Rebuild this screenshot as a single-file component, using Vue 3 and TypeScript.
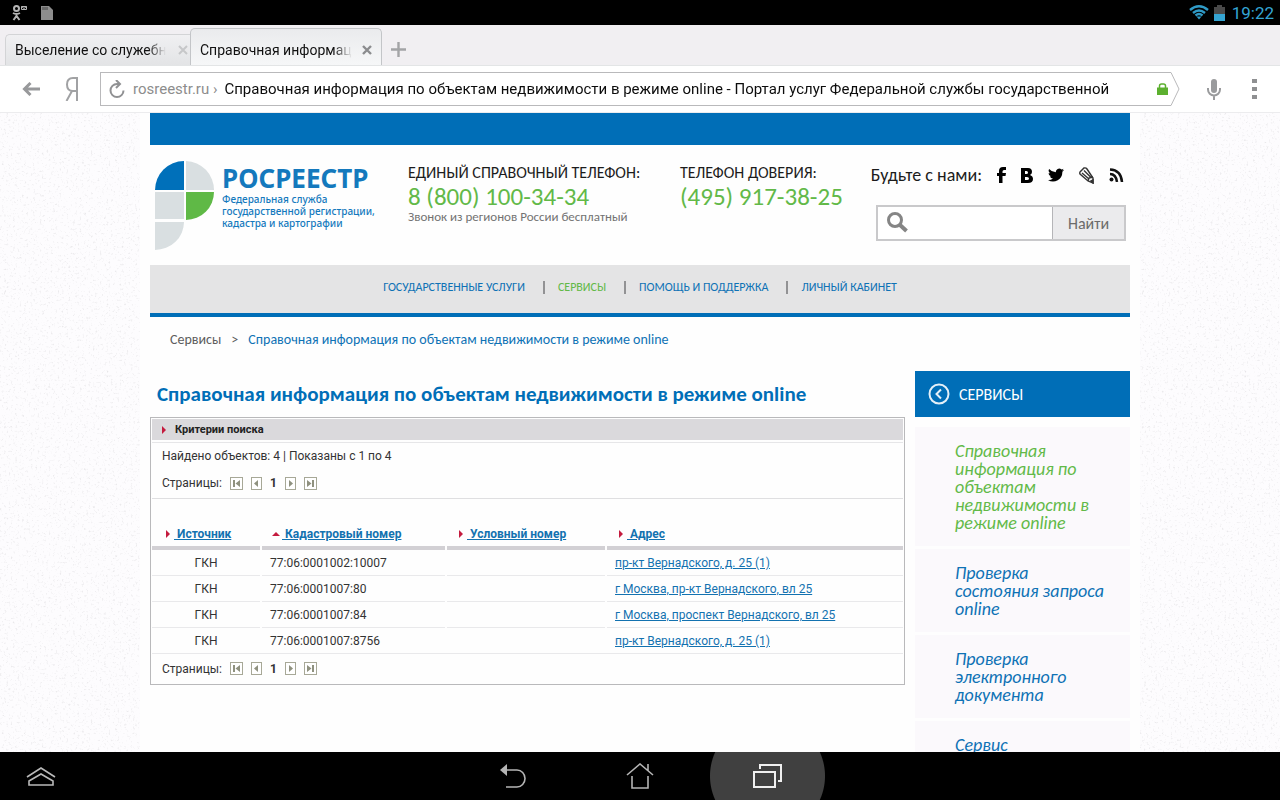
<script setup lang="ts">
import { ref } from 'vue'

interface Column {
  title: string
  ascending: boolean
}

interface Row {
  source: string
  cadastral: string
  conditional: string
  address: string
}

const pageTitle = 'Справочная информация по объектам недвижимости в режиме online'
const addressText = ref(pageTitle + ' - Портал услуг Федеральной службы государственной')
const query = ref('')

const sections = [
  { title: 'Государственные услуги', active: false },
  { title: 'Сервисы', active: true },
  { title: 'Помощь и поддержка', active: false },
  { title: 'Личный кабинет', active: false },
]

const columns: Column[] = [
  { title: 'Источник', ascending: false },
  { title: 'Кадастровый номер', ascending: true },
  { title: 'Условный номер', ascending: false },
  { title: 'Адрес', ascending: false },
]

const rows: Row[] = [
  { source: 'ГКН', cadastral: '77:06:0001002:10007', conditional: '', address: 'пр-кт Вернадского, д. 25 (1)' },
  { source: 'ГКН', cadastral: '77:06:0001007:80', conditional: '', address: 'г Москва, пр-кт Вернадского, вл 25' },
  { source: 'ГКН', cadastral: '77:06:0001007:84', conditional: '', address: 'г Москва, проспект Вернадского, вл 25' },
  { source: 'ГКН', cadastral: '77:06:0001007:8756', conditional: '', address: 'пр-кт Вернадского, д. 25 (1)' },
]

const services = [
  { title: pageTitle, active: true },
  { title: 'Проверка состояния запроса online', active: false },
  { title: 'Проверка электронного документа', active: false },
  { title: 'Сервис', active: false },
]

const pagerBefore = [
  { label: 'Первая страница', width: 13, path: 'M3 3h2v7H3zM10 3v7L5.500 6.500z' },
  { label: 'Предыдущая страница', width: 11, path: 'M7 3v7L3 6.500z' },
]
const pagerAfter = [
  { label: 'Следующая страница', width: 11, path: 'M4 3v7l4-3.500z' },
  { label: 'Последняя страница', width: 13, path: 'M3 3v7l4.500-3.500zM8 3h2v7H8z' },
]
</script>

<template>
  <div class="device">
    <header class="status">
      <div class="status-group">
        <svg width="16" height="16" viewBox="0 0 16 16" fill="none" stroke="#b5b5b5" stroke-width="2">
          <circle cx="4.500" cy="3.500" r="2.500" />
          <path d="M1 8q3.500 2 7 0M4.500 9v2M1.500 15l3-4 3 4" />
          <path d="M9.500 1.500h5v3h-5zM9.500 1.500l2.500 2 2.500-2" stroke-width="1" />
        </svg>
        <svg width="13" height="14" viewBox="0 0 13 14">
          <path d="M1 0h8l4 4v10H1z" fill="#8d8d8d" />
          <path d="M3 1v3M5 1v3M7 1v3" stroke="#444" />
        </svg>
      </div>
      <div class="status-group status-right">
        <svg width="20" height="15" viewBox="0 0 20 15" fill="none" stroke="#2f9ac6" stroke-width="2.400">
          <path d="M1 5q9-7.500 18 0M4 8q6-5 12 0M6.500 10.500q3.500-3 7 0" />
          <path d="M7.500 11.500h5L10 14.500z" fill="#2f9ac6" stroke="none" />
        </svg>
        <svg width="11" height="16" viewBox="0 0 11 16">
          <path d="M3 0h5v2h3v7H0V2h3z" fill="#4a4a4a" />
          <path d="M0 9h11v7H0z" fill="#35a4d2" />
        </svg>
        <span class="clock">19:22</span>
      </div>
    </header>

    <div class="tabs">
      <div class="tab tab-back">
        <button class="tab-title">Выселение со служебн</button>
        <button class="icon-button" aria-label="Закрыть вкладку">
          <svg width="10" height="10" viewBox="0 0 10 10" stroke="#c6c7c9" stroke-width="2"><path d="M1 1l8 8M9 1L1 9" /></svg>
        </button>
      </div>
      <div class="tab tab-front">
        <button class="tab-title">Справочная информац</button>
        <button class="icon-button" aria-label="Закрыть вкладку">
          <svg width="10" height="10" viewBox="0 0 10 10" stroke="#8b8c8e" stroke-width="2.400"><path d="M1 1l8 8M9 1L1 9" /></svg>
        </button>
      </div>
      <button class="icon-button new-tab" aria-label="Новая вкладка">
        <svg width="15" height="15" viewBox="0 0 15 15" stroke="#a3a4a6" stroke-width="2.400"><path d="M7.500 0v15M0 7.500h15" /></svg>
      </button>
    </div>

    <div class="toolbar">
      <button class="icon-button back" aria-label="Назад">
        <svg width="18" height="14" viewBox="0 0 18 14" fill="none" stroke="#98999b" stroke-width="3"><path d="M18 7H3M8.500 1l-6 6 6 6" /></svg>
      </button>
      <button class="icon-button yandex" aria-label="Яндекс">
        <svg width="13" height="24" viewBox="0 0 13 24" fill="none" stroke="#a1a2a4" stroke-width="2"><path d="M12 24V1H8C4 1 2 3.500 2 7.500S4 14 8 14h4M7 14L1.500 24" /></svg>
      </button>
      <div class="omnibox">
        <div class="omni-body">
          <button class="icon-button" aria-label="Обновить">
            <svg width="16" height="18" viewBox="0 0 16 18" fill="none" stroke="#909193" stroke-width="2"><path d="M14.500 10.500a6.500 6.500 0 1 1-6.500-6.500h2.500M7 0l4 4-4 4" /></svg>
          </button>
          <label class="domain" for="address">rosreestr.ru ›</label>
          <input id="address" v-model="addressText" class="address" type="text">
          <svg width="11" height="12" viewBox="0 0 11 12" aria-label="Защищённое соединение"><path d="M0 4.500h11V12H0z" fill="#5cb02f" /><path d="M2.500 5V3q0-2 2-2h2q2 0 2 2v2" fill="none" stroke="#5cb02f" stroke-width="1.500" /></svg>
        </div>
        <svg class="omni-tip" width="10" height="34" viewBox="0 0 10 34" fill="#fff" stroke="#b9b9bb"><path d="M0 .5h1L9 17 1 33.500H0" /></svg>
      </div>
      <button class="icon-button mic" aria-label="Голосовой поиск">
        <svg width="14" height="21" viewBox="0 0 14 21"><rect x="4" y="0" width="6" height="14" rx="3" fill="#9a9b9d" /><path d="M1 9v1.500a6 6 0 0 0 12 0V9M7 16v5" fill="none" stroke="#9a9b9d" stroke-width="2" /></svg>
      </button>
      <button class="icon-button" aria-label="Меню">
        <svg width="6" height="21" viewBox="0 0 6 21" fill="#8f9092"><path d="M0 0h5v4H0zM0 8h5v4H0zM0 16h5v4H0z" /></svg>
      </button>
    </div>

    <main class="web">
      <svg class="paper" aria-hidden="true">
        <filter id="grain" x="0" y="0" width="100%" height="100%">
          <feTurbulence type="fractalNoise" baseFrequency="0.45" numOctaves="2" seed="4" />
          <feColorMatrix values="0 0 0 0 0.780  0 0 0 0 0.770  0 0 0 0 0.790  2.600 0 0 0 -1.500" />
        </filter>
        <rect width="100%" height="100%" filter="url(#grain)" />
      </svg>
      <div class="page">
        <div class="top-bar"></div>

        <div class="masthead">
          <a class="brand" href="#">
            <svg width="60" height="90" viewBox="0 0 60 90">
              <path d="M29 0v29H0A29 29 0 0 1 29 0z" fill="#0070ba" />
              <path d="M31 0a29 29 0 0 1 28 29H31z" fill="#d9dfe1" />
              <path d="M0 31h29v27H0z" fill="#d9dfe1" />
              <path d="M31 31h28a28 28 0 0 1-28 28z" fill="#5fb946" />
              <path d="M0 61h29A29 28 0 0 1 0 89z" fill="#d9dfe1" />
            </svg>
            <span class="brand-text">
              <strong>РОСРЕЕСТР</strong>
              <span>Федеральная служба<br>государственной регистрации,<br>кадастра и картографии</span>
            </span>
          </a>
          <div class="phone phone-main">
            <span class="phone-label">ЕДИНЫЙ СПРАВОЧНЫЙ ТЕЛЕФОН:</span>
            <span class="phone-number">8 (800) 100-34-34</span>
            <span class="phone-note">Звонок из регионов России бесплатный</span>
          </div>
          <div class="phone">
            <span class="phone-label">ТЕЛЕФОН ДОВЕРИЯ:</span>
            <span class="phone-number">(495) 917-38-25</span>
          </div>
          <div class="contact">
            <div class="social">
              <span class="social-label">Будьте с нами:</span>
              <a href="#" aria-label="Facebook"><svg width="9" height="16" viewBox="0 0 9 16"><path d="M2 16V9H0V6h2V4q0-4 4-4h3v3H7Q5.500 3 5.500 4.500V6H9L8.500 9h-3v7z" /></svg></a>
              <a href="#" aria-label="ВКонтакте"><svg width="12" height="15" viewBox="0 0 12 15"><path fill-rule="evenodd" d="M0 0h7q4 0 4 4 0 2-2 3 3 1 3 4 0 4-5 4H0zM4 3v3h1.500Q7 6 7 4.500T5.500 3zM4 9v3h2q2 0 2-1.500T6 9z" /></svg></a>
              <a href="#" aria-label="Twitter"><svg width="16" height="14" viewBox="0 0 24 20"><path d="M24 2.400a10 10 0 0 1-2.800.8A5 5 0 0 0 23.300.5a10 10 0 0 1-3.100 1.200A5 5 0 0 0 11.800 6 14 14 0 0 1 1.700 1 5 5 0 0 0 3.200 7.500a5 5 0 0 1-2.200-.6 5 5 0 0 0 4 4.900 5 5 0 0 1-2.200.1 5 5 0 0 0 4.600 3.400A10 10 0 0 1 0 17.500 14 14 0 0 0 21.500 5 10 10 0 0 0 24 2.400z" /></svg></a>
              <a href="#" aria-label="LiveJournal"><svg width="15" height="17" viewBox="0 0 15 17" fill="none" stroke="#333" stroke-width="1.400"><path d="M1 5L5 1q2-.5 3 1l6 9v5l-5-2-8-7q-.5-1 0-2zM3 6l7 6M5 3.500l7 7M9 14l1-3 4-1" /><path d="M12 14l2 2v-3z" fill="#222" /></svg></a>
              <a href="#" aria-label="RSS"><svg width="15" height="14" viewBox="0 0 15 14" fill="none" stroke="#111" stroke-width="2.500"><circle cx="2.500" cy="11.500" r="2" fill="#111" stroke="none" /><path d="M1 6q6 0 7 8M1 1.500q11 .5 12 12.500" /></svg></a>
            </div>
            <form class="search" @submit.prevent>
              <label class="search-field" for="query">
                <svg width="21" height="21" viewBox="0 0 21 21" fill="none" stroke="#858585" aria-label="Поиск"><circle cx="8" cy="8" r="6.500" stroke-width="3" /><path d="M12.500 12.500l7 6.500" stroke-width="4" /></svg>
                <input id="query" v-model="query" type="text">
              </label>
              <button type="submit">Найти</button>
            </form>
          </div>
        </div>

        <nav class="sections">
          <a v-for="s in sections" :key="s.title" href="#" :class="{ active: s.active }">{{ s.title }}</a>
        </nav>

        <nav class="crumbs">
          <a class="crumb-parent" href="#">Сервисы</a>
          <span>&gt;</span>
          <a href="#">{{ pageTitle }}</a>
        </nav>

        <div class="columns">
          <section class="main-column">
            <h1>{{ pageTitle }}</h1>
            <div class="results">
              <button class="criteria">
                <svg width="4" height="8" viewBox="0 0 4 8"><path d="M0 0l4 4-4 4z" fill="#c41b3e" /></svg>
                Критерии поиска
              </button>
              <p class="found">Найдено объектов: 4 | Показаны с 1 по 4</p>
              <div class="pager">
                <span>Страницы:</span>
                <button v-for="p in pagerBefore" :key="p.label" :aria-label="p.label">
                  <svg :width="p.width" height="13"><rect x="0.500" y="0.500" :width="p.width - 1" height="12" fill="#fff" stroke="#a7a897" /><path :d="p.path" fill="#8f917f" /></svg>
                </button>
                <b>1</b>
                <button v-for="p in pagerAfter" :key="p.label" :aria-label="p.label">
                  <svg :width="p.width" height="13"><rect x="0.500" y="0.500" :width="p.width - 1" height="12" fill="#fff" stroke="#a7a897" /><path :d="p.path" fill="#8f917f" /></svg>
                </button>
              </div>
              <table>
                <colgroup>
                  <col class="col-source"><col class="col-cadastral"><col class="col-conditional"><col>
                </colgroup>
                <thead>
                  <tr>
                    <th v-for="c in columns" :key="c.title" scope="col">
                      <span class="th-inner">
                        <svg v-if="c.ascending" width="8" height="4" viewBox="0 0 8 4"><path d="M0 4l4-4 4 4z" fill="#c41b3e" /></svg>
                        <svg v-else width="4" height="8" viewBox="0 0 4 8"><path d="M0 0l4 4-4 4z" fill="#c41b3e" /></svg>
                        <a href="#">&nbsp;{{ c.title }}</a>
                      </span>
                    </th>
                  </tr>
                </thead>
                <tbody>
                  <tr v-for="r in rows" :key="r.cadastral">
                    <td class="source">{{ r.source }}</td>
                    <td>{{ r.cadastral }}</td>
                    <td>{{ r.conditional }}</td>
                    <td><a href="#">{{ r.address }}</a></td>
                  </tr>
                </tbody>
              </table>
              <div class="pager pager-bottom">
                <span>Страницы:</span>
                <button v-for="p in pagerBefore" :key="p.label" :aria-label="p.label">
                  <svg :width="p.width" height="13"><rect x="0.500" y="0.500" :width="p.width - 1" height="12" fill="#fff" stroke="#a7a897" /><path :d="p.path" fill="#8f917f" /></svg>
                </button>
                <b>1</b>
                <button v-for="p in pagerAfter" :key="p.label" :aria-label="p.label">
                  <svg :width="p.width" height="13"><rect x="0.500" y="0.500" :width="p.width - 1" height="12" fill="#fff" stroke="#a7a897" /><path :d="p.path" fill="#8f917f" /></svg>
                </button>
              </div>
            </div>
          </section>

          <aside class="side">
            <a class="side-head" href="#">
              <svg width="22" height="22" viewBox="0 0 22 22" fill="none" stroke="#e4f0f8" stroke-width="2"><circle cx="11" cy="11" r="9.500" /><path d="M13 6.500L8.500 11l4.500 4.500" /></svg>
              СЕРВИСЫ
            </a>
            <a v-for="s in services" :key="s.title" class="side-item" :class="{ active: s.active }" href="#">{{ s.title }}</a>
          </aside>
        </div>
      </div>
    </main>

    <nav class="system">
      <button class="sys-left" aria-label="Развернуть">
        <svg width="30" height="19" viewBox="0 0 30 19" fill="none" stroke="#b9b9b9" stroke-width="1.600"><path d="M1 10L15 1l14 9M3 14l12-7 12 7v4H3z" /></svg>
      </button>
      <button class="sys-key" aria-label="Назад">
        <svg width="27" height="25" viewBox="0 0 27 25" fill="none" stroke="#b5b5b5" stroke-width="1.600"><path d="M6 6h11a8 8.500 0 0 1 0 17H6" /><path d="M7 0v12L0 6z" fill="#b5b5b5" stroke="none" /></svg>
      </button>
      <button class="sys-key" aria-label="Домой">
        <svg width="28" height="27" viewBox="0 0 28 27" fill="none" stroke="#b5b5b5" stroke-width="1.600"><path d="M1 12L14 1l13 11M22 8V1M6 13v12h16V13" /></svg>
      </button>
      <button class="sys-key pressed" aria-label="Недавние приложения">
        <svg width="29" height="24" viewBox="0 0 29 24" fill="none" stroke="#f0f0f0" stroke-width="2"><rect x="1" y="8" width="21" height="15" /><path d="M7 5V1h21v16h-3" /></svg>
      </button>
    </nav>
  </div>
</template>

<style>
body {
  margin: 0;
}
</style>

<style scoped>
* {
  box-sizing: border-box;
}
.device {
  display: flex;
  flex-direction: column;
  height: 100vh;
  overflow: hidden;
  background: #fff;
  font-family: Roboto, sans-serif;
}
svg {
  display: block;
  flex: none;
}
button {
  padding: 0;
  border: 0;
  background: none;
  color: inherit;
  font: inherit;
}
input {
  min-width: 0;
  padding: 0;
  border: 0;
  outline: 0;
  background: none;
  font: inherit;
}
a {
  color: #0e72b5;
  text-decoration: none;
  white-space: nowrap;
}
.status {
  display: flex;
  flex: none;
  align-items: center;
  justify-content: space-between;
  height: 25px;
  padding: 0 6px 0 12px;
  background: #000;
}
.status-group {
  display: flex;
  align-items: center;
  gap: 12px;
}
.status-right {
  gap: 5px;
}
.clock {
  margin-left: 2px;
  color: #34a5d4;
  font-size: 17px;
}
.tabs {
  display: flex;
  flex: none;
  align-items: flex-end;
  height: 41px;
  padding-left: 5px;
  border-bottom: 1px solid #e3e5e6;
  background: #f1eff2;
}
.tab {
  display: flex;
  align-items: center;
  justify-content: space-between;
  border: 1px solid #d3d4d6;
  border-bottom: 0;
  border-radius: 5px 5px 0 0;
  color: #111;
  font-size: 14px;
}
.tab-title {
  text-align: left;
  white-space: nowrap;
  mask-image: linear-gradient(to right, #000 88%, transparent);
}
.tab-back {
  width: 185px;
  height: 31px;
  padding: 0 2px 0 9px;
  border-right: 0;
  border-top-right-radius: 0;
  background: linear-gradient(#f0f0f2, #e3e4e6);
}
.tab-front {
  width: 192px;
  height: 37px;
  padding: 6px 9px 0 9px;
  border-color: #c3c5c8;
  background: linear-gradient(#eaebed, #f6f7f8);
}
.new-tab {
  padding: 0 9px 8px;
}
.toolbar {
  display: flex;
  flex: none;
  align-items: center;
  height: 47px;
  padding: 0 22px;
  border-bottom: 1px solid #ececee;
  background: #fff;
}
.yandex {
  margin: 0 22px 0 25px;
}
.omnibox {
  display: flex;
  flex: 1;
  min-width: 0;
}
.omni-body {
  display: flex;
  flex: 1;
  align-items: center;
  min-width: 0;
  height: 34px;
  padding: 0 2px 0 8px;
  border: 1px solid #b9b9bb;
  border-right: 0;
  font-size: 15px;
}
.domain {
  margin: 0 7px 0 8px;
  color: #8d8d8d;
  white-space: nowrap;
}
.address {
  flex: 1;
  margin-right: 15px;
  color: #0c0c0c;
  mask-image: linear-gradient(to right, #000 97%, transparent);
}
.mic {
  margin: 0 31px 0 27px;
}
.web {
  position: relative;
  flex: 1;
  min-height: 0;
  overflow: hidden;
  background: #fdfcfe;
  font-family: Carlito, Calibri, "Open Sans", sans-serif;
}
.paper {
  position: absolute;
  inset: 0;
  width: 100%;
  height: 100%;
}
.page {
  position: relative;
  max-width: 1000px;
  margin: 0 auto;
  padding: 0 10px;
  background: #fefefe;
}
.top-bar {
  height: 32px;
  background: #006eb7;
}
.masthead {
  display: flex;
  height: 120px;
  padding: 16px 4px 0 5px;
}
.brand {
  display: flex;
  align-items: flex-start;
  width: 253px;
  gap: 7px;
  color: #1479bd;
}
.brand-text {
  display: flex;
  flex-direction: column;
  padding-top: 2px;
  font-family: "Noto Sans", sans-serif;
  font-size: 10px;
  font-weight: 500;
  line-height: 12px;
  white-space: nowrap;
}
.brand-text strong {
  font-size: 26px;
  line-height: 30px;
}
.phone {
  display: flex;
  flex-direction: column;
  color: #1c1c1c;
  white-space: nowrap;
}
.phone-main {
  width: 272px;
}
.phone-label {
  font-size: 16px;
  line-height: 24px;
}
.phone-number {
  color: #62b948;
  font-size: 25px;
  line-height: 24px;
}
.phone-note {
  color: #737373;
  font-size: 13px;
  line-height: 16px;
}
.contact {
  display: flex;
  flex-direction: column;
  align-items: flex-end;
  margin-left: auto;
  gap: 16px;
}
.social {
  display: flex;
  align-items: center;
  height: 28px;
  padding-right: 2px;
  gap: 15px;
  color: #1c1c1c;
  font-size: 18px;
  white-space: nowrap;
}
.search {
  display: flex;
  width: 250px;
  height: 36px;
  border: 2px solid #c9c9cb;
  background: #fff;
}
.search-field {
  display: flex;
  flex: 1;
  align-items: center;
  min-width: 0;
  padding: 0 0 2px 9px;
  gap: 8px;
}
.search-field input {
  flex: 1;
  font-size: 16px;
}
.search button {
  width: 72px;
  border-left: 1px solid #b5b5b8;
  background: #ebebed;
  color: #6b6b6b;
  font-size: 16px;
}
.sections {
  display: flex;
  align-items: center;
  justify-content: center;
  height: 52px;
  padding-bottom: 4px;
  border-bottom: 4px solid #006eb7;
  background: #e4e4e5;
  font-size: 12px;
  line-height: 13px;
  text-transform: uppercase;
}
.sections a + a {
  margin-left: 18px;
  padding-left: 13px;
  border-left: 2px solid #929294;
}
.sections .active {
  color: #62b948;
}
.crumbs {
  display: flex;
  align-items: center;
  height: 44px;
  padding-left: 20px;
  gap: 10px;
  color: #5d5d5d;
  font-size: 14px;
}
.crumb-parent {
  color: #5d5d5d;
}
.columns {
  display: flex;
  align-items: flex-start;
  padding: 10px 0 20px;
  gap: 10px;
}
.main-column {
  flex: 1;
  min-width: 0;
}
h1 {
  margin: 0;
  padding: 9px 0 9px 7px;
  color: #006eb7;
  font-size: 21px;
  line-height: 28px;
}
.results {
  padding: 1px;
  border: 1px solid #b9b9bb;
  color: #333;
  font-family: Roboto, sans-serif;
  font-size: 12px;
}
.criteria {
  display: flex;
  align-items: center;
  width: 100%;
  height: 21px;
  padding-left: 10px;
  gap: 9px;
  background: #dad9dc;
  color: #222;
  font-size: 11px;
  font-weight: 700;
}
.found {
  margin: 2px 0 0;
  padding-left: 10px;
  border-top: 1px solid #e6e6e8;
  line-height: 27px;
}
.pager {
  display: flex;
  align-items: center;
  height: 29px;
  padding: 0 0 2px 10px;
  gap: 8px;
  border-bottom: 1px solid #dfdfe1;
}
.pager b {
  font-size: 12px;
}
.pager-bottom {
  padding-bottom: 0;
  border-bottom: 0;
}
table {
  width: 100%;
  table-layout: fixed;
  border-collapse: separate;
  border-spacing: 0;
}
.col-source {
  width: 110px;
}
.col-cadastral {
  width: 185px;
}
.col-conditional {
  width: 160px;
}
th {
  padding: 27px 0 8px 12px;
  background: linear-gradient(#d2d0d4, #d2d0d4) 0 100% / calc(100% - 2px) 4px no-repeat;
  line-height: 16px;
  text-align: left;
}
th:first-child {
  padding-left: 14px;
}
th:nth-child(2) {
  padding-left: 10px;
}
.th-inner {
  display: flex;
  align-items: center;
  gap: 4px;
}
th:nth-child(2) .th-inner {
  gap: 2px;
}
table a {
  color: #1372b0;
  text-decoration: underline;
}
td {
  height: 26px;
  padding: 0 8px;
  background: linear-gradient(#e9e9eb, #e9e9eb) 0 100% / calc(100% - 2px) 1px no-repeat;
}
th:last-child {
  background-size: 100% 4px;
}
td:last-child,
tbody tr:last-child td {
  background-size: 100% 1px;
}
.source {
  padding-right: 10px;
  text-align: center;
}
.side {
  width: 215px;
}
.side-head {
  display: flex;
  align-items: center;
  height: 46px;
  margin-bottom: 10px;
  padding-left: 13px;
  gap: 9px;
  background: #006eb7;
  color: #fff;
  font-size: 16px;
}
.side-item {
  display: block;
  margin-bottom: 3px;
  padding: 15px 20px 14px 40px;
  background: #fbf9fc;
  font-size: 18px;
  font-style: italic;
  line-height: 18px;
  white-space: normal;
}
.side-item.active {
  color: #62b948;
}
.system {
  display: flex;
  position: relative;
  flex: none;
  align-items: center;
  justify-content: center;
  height: 48px;
  gap: 12px;
  background: #000;
}
.sys-left {
  position: absolute;
  left: 26px;
}
.sys-key {
  display: grid;
  place-items: center;
  width: 115px;
  height: 48px;
}
.pressed {
  background: radial-gradient(circle, #404040 57px, #000 58px);
}
</style>
